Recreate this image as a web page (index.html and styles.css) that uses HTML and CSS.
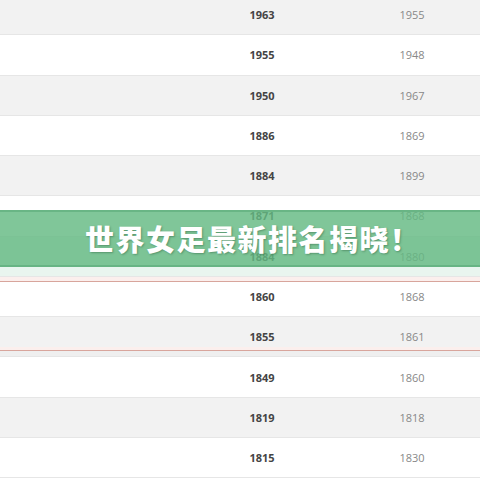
FILE: index.html
```html
<!DOCTYPE html>
<html lang="zh">
<head>
<meta charset="utf-8">
<title>世界女足最新排名揭晓</title>
<link rel="stylesheet" href="styles.css">
</head>
<body>
<div class="page">
  <div class="table">
    <div class="row grey"><span class="c1">1963</span><span class="c2">1955</span></div>
    <div class="row"><span class="c1">1955</span><span class="c2">1948</span></div>
    <div class="row grey"><span class="c1">1950</span><span class="c2">1967</span></div>
    <div class="row"><span class="c1">1886</span><span class="c2">1869</span></div>
    <div class="row grey"><span class="c1">1884</span><span class="c2">1899</span></div>
    <div class="row"><span class="c1">1871</span><span class="c2">1868</span></div>
    <div class="row grey tint"><span class="c1">1884</span><span class="c2">1880</span></div>
    <div class="row hl-top"><span class="c1">1860</span><span class="c2">1868</span></div>
    <div class="row grey hl-bottom"><span class="c1">1855</span><span class="c2">1861</span></div>
    <div class="row"><span class="c1">1849</span><span class="c2">1860</span></div>
    <div class="row grey"><span class="c1">1819</span><span class="c2">1818</span></div>
    <div class="row"><span class="c1">1815</span><span class="c2">1830</span></div>
  </div>
  <div class="banner"><h1 class="banner-title">世界女足最新排名揭晓！</h1></div>
</div>
</body>
</html>
```
FILE: styles.css
```css
html, body {
  margin: 0;
  padding: 0;
  background: #ffffff;
}
.page {
  position: relative;
  width: 480px;
  height: 480px;
  overflow: hidden;
  font-family: "Open Sans", "Liberation Sans", sans-serif;
}
.table {
  margin-top: -5px;
  display: flex;
  flex-direction: column;
}
.row {
  box-sizing: border-box;
  height: 40.27px;
  border-bottom: 1px solid #e6e6e6;
  background: #ffffff;
  display: grid;
  grid-template-columns: 222px 80px 70px 80px 1fr;
  align-items: center;
  font-size: 11px;
}
.row.grey {
  background: #f2f2f2;
}
.row.tint {
  background: #e9f5ef;
}
.c1 {
  grid-column: 2;
  text-align: center;
  font-weight: 700;
  color: #444444;
}
.c2 {
  grid-column: 4;
  text-align: center;
  color: #888888;
}
.hl-top {
  box-shadow: inset 0 4px 0 0 #fbefed, inset 0 5px 0 0 #d8a59c;
}
.hl-bottom {
  box-shadow: inset 0 -5px 0 0 #efefef, inset 0 -6px 0 0 #d8a59c, inset 0 -9px 0 0 #fbefed;
}
.banner {
  position: absolute;
  left: 0;
  right: 0;
  top: 210px;
  height: 57px;
  box-sizing: border-box;
  padding-left: 85px;
  background: rgba(100, 185, 130, 0.82);
  border-top: 2px solid rgba(90, 170, 120, 0.6);
  border-bottom: 2px solid rgba(90, 170, 120, 0.6);
  display: flex;
  align-items: center;
  justify-content: flex-start;
}
.banner-title {
  margin: 0;
  font-family: "Noto Sans CJK SC", "Noto Sans", sans-serif;
  font-weight: 900;
  font-size: 29px;
  letter-spacing: 1.5px;
  line-height: 1;
  color: #ffffff;
  text-shadow: 1px 1px 2px rgba(40, 90, 60, 0.45);
}
```
